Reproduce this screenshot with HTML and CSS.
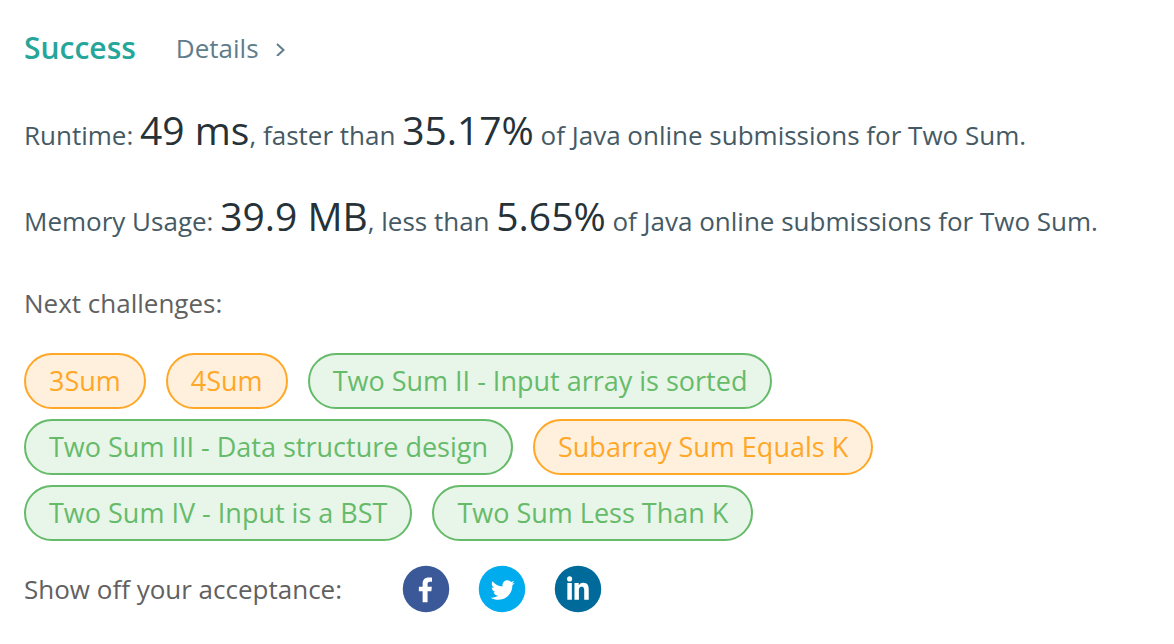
FILE: index.html
```html
<!DOCTYPE html>
<html lang="en">
<head>
<meta charset="utf-8">
<title>Submission result</title>
<link rel="stylesheet" href="styles.css">
</head>
<body>
<main class="result">
  <header class="result-header">
    <h1 class="status">Success</h1>
    <a class="details" href="#details">Details
      <svg class="chevron" viewBox="0 0 12 16" aria-hidden="true"><path d="M2 4l6.500 6-6.500 6" fill="none" stroke="currentColor" stroke-width="2"/></svg>
    </a>
  </header>
  <p class="stat">Runtime: <span class="value">49 ms</span>, faster than <span class="value">35.17%</span> of Java online submissions for Two Sum.</p>
  <p class="stat">Memory Usage: <span class="value">39.9 MB</span>, less than <span class="value">5.65%</span> of Java online submissions for Two Sum.</p>
  <h2 class="label">Next challenges:</h2>
  <nav class="challenges">
    <a class="tag medium" href="#3sum">3Sum</a>
    <a class="tag medium" href="#4sum">4Sum</a>
    <a class="tag easy" href="#two-sum-2">Two Sum II - Input array is sorted</a>
    <a class="tag easy" href="#two-sum-3">Two Sum III - Data structure design</a>
    <a class="tag medium" href="#subarray">Subarray Sum Equals K</a>
    <a class="tag easy" href="#two-sum-4">Two Sum IV - Input is a BST</a>
    <a class="tag easy" href="#less-than-k">Two Sum Less Than K</a>
  </nav>
  <footer class="share">
    <span class="label">Show off your acceptance:</span>
    <div class="social">
      <a href="#facebook" aria-label="Facebook"><svg viewBox="0 0 64 64"><circle cx="32" cy="32" r="31" fill="#3b5998"/><path fill="#fff" d="M34.100 49.500V35h5l.7-6h-5.700v-3.500c0-2 .5-3.200 3.100-3.200H40v-5.400c-.5-.1-2.400-.2-4.500-.2-4.800 0-8 2.800-8 8V29H22.500v6h5v14.500z"/></svg></a>
      <a href="#twitter" aria-label="Twitter"><svg viewBox="0 0 64 64"><circle cx="32" cy="32" r="31" fill="#00aced"/><path fill="#fff" d="M49 23.500c-1.200.5-2.400.9-3.800 1 1.400-.8 2.400-2.100 2.900-3.600-1.300.8-2.700 1.300-4.200 1.600C42.700 21.200 41 20.400 39.200 20.400c-3.600 0-6.600 2.900-6.600 6.600 0 .5.1 1 .2 1.500-5.500-.3-10.300-2.900-13.500-6.900-.6 1-.9 2.100-.9 3.300 0 2.300 1.200 4.300 2.900 5.500-1.100 0-2.100-.3-3-.8v.1c0 3.200 2.300 5.800 5.300 6.400-.6.1-1.100.2-1.700.2-.4 0-.8 0-1.200-.1.800 2.600 3.300 4.500 6.100 4.600-2.200 1.800-5.100 2.800-8.200 2.800-.5 0-1.100 0-1.600-.1 2.900 1.900 6.400 2.900 10.100 2.900 12.100 0 18.700-10 18.700-18.700v-.8c1.200-1 2.300-2.100 3.200-3.400z"/></svg></a>
      <a href="#linkedin" aria-label="LinkedIn"><svg viewBox="0 0 64 64"><circle cx="32" cy="32" r="31" fill="#006b9b"/><circle cx="20.800" cy="18.500" r="3.400" fill="#fff"/><path fill="#fff" d="M17.800 24h6v22.200h-6zM27.300 24H33v3c.9-1.700 2.900-3.500 6-3.500 6.100 0 7.300 4.100 7.300 9.600v13.100h-6V34.600c0-2.700-.1-5.700-3.300-5.700-3.400 0-3.800 2.700-3.800 5.600v11.700h-5.900z"/></svg></a>
    </div>
  </footer>
</main>
</body>
</html>
```
FILE: styles.css
```css
body {
  margin: 0;
  background: #fff;
  color: #455a64;
  font-family: "Segoe UI", "Open Sans", "Noto Sans", sans-serif;
  font-size: 26px;
}

a {
  color: inherit;
  text-decoration: none;
}

.result {
  padding: 28px 24px;
}

.result-header {
  display: flex;
  align-items: center;
  gap: 40px;
  line-height: 40px;
  margin-bottom: 34px;
}

.status {
  margin: 0;
  color: #26a69a;
  font-size: 30px;
  font-weight: 600;
}

.details {
  display: flex;
  align-items: center;
  gap: 16px;
  color: #607d8b;
}

.chevron {
  width: 12px;
  height: 16px;
}

.stat {
  margin: 0 0 20px;
  line-height: 66px;
}

.value {
  color: #263238;
  font-size: 39px;
  line-height: 40px;
}

.label {
  margin: 0;
  color: #616161;
  font-size: 26px;
  font-weight: 400;
  line-height: 40px;
}

.stat + .label {
  margin-top: 29px;
}

.challenges {
  display: flex;
  flex-wrap: wrap;
  gap: 10px 20px;
  max-width: 860px;
  margin: 30px 0 24px;
}

.tag {
  padding: 0 23px;
  border: 2px solid;
  border-radius: 28px;
  font-size: 27px;
  line-height: 52px;
}

.medium {
  color: #ffa726;
  background: #fff0de;
}

.easy {
  color: #66bb6a;
  background: #e8f5e9;
}

.share {
  display: flex;
  align-items: center;
  gap: 60px;
}

.social {
  display: flex;
  gap: 28px;
}

.social a,
.social svg {
  display: block;
  width: 48px;
  height: 48px;
}
```
